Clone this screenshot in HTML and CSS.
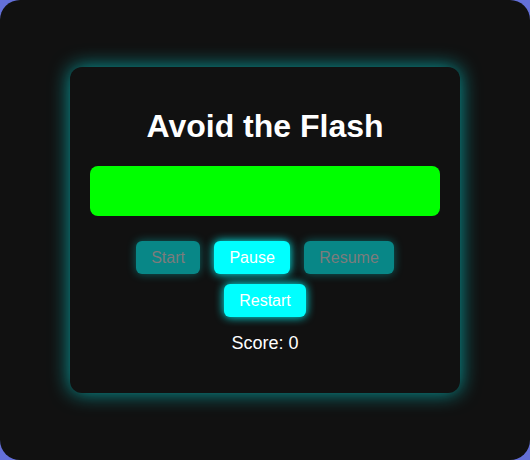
FILE: index.html
```html
<!DOCTYPE html>
<html>
<head>
<meta charset="utf-8">
<link rel="stylesheet" href="styles.css">
</head>
<body>
<div class="screen">
  <div class="card">
    <h1 class="title">Avoid the Flash</h1>
    <div class="bar"></div>
    <div class="controls">
      <button class="btn" disabled>Start</button>
      <button class="btn">Pause</button>
      <button class="btn" disabled>Resume</button>
      <button class="btn">Restart</button>
    </div>
    <p class="score">Score: 0</p>
  </div>
</div>
</body>
</html>
```
FILE: styles.css
```css
html, body {
  margin: 0;
  padding: 0;
  background: #6470d8;
  font-family: "Liberation Sans", Arial, sans-serif;
}
.screen {
  width: 530px;
  height: 460px;
  background: #111111;
  border-radius: 20px;
  display: flex;
  align-items: center;
  justify-content: center;
}
.card {
  width: 350px;
  height: 286px;
  padding: 20px;
  background: #111111;
  border-radius: 12px;
  box-shadow: 0 0 20px rgba(0, 255, 255, 0.6);
  text-align: center;
  color: #ffffff;
}
.title {
  font-size: 32px;
  font-weight: bold;
  margin: 21px 0 21px;
  line-height: 37px;
}
.bar {
  height: 50px;
  background: #00ff00;
  border-radius: 8px;
  margin-bottom: 20px;
}
.controls {
  width: 290px;
  margin: 0 auto;
}
.btn {
  font-family: "Liberation Sans", Arial, sans-serif;
  font-size: 16px;
  height: 33px;
  padding: 0 15px;
  margin: 5px;
  border: none;
  border-radius: 6px;
  background: #00ffff;
  color: #ffffff;
  box-shadow: 0 0 10px #00ffff;
  vertical-align: top;
}
.btn:disabled {
  background: #088787;
  color: #7c7c7c;
  box-shadow: 0 0 10px rgba(0, 255, 255, 0.35);
}
.score {
  font-size: 18px;
  margin: 11px 0 0;
  line-height: 21px;
}
```
